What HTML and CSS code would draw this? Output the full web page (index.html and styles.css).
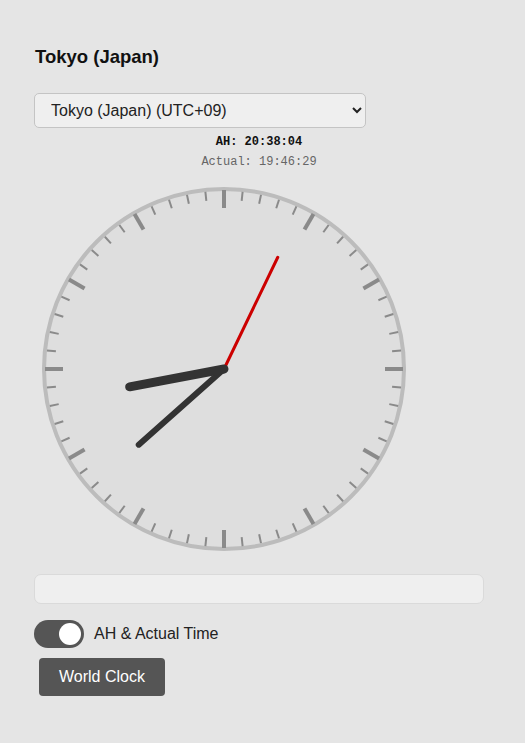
FILE: index.html
```html
<!DOCTYPE html>
<html>
<head>
<meta charset="utf-8">
<link rel="stylesheet" href="styles.css">
</head>
<body>
<div class="page">
  <h1 class="title">Tokyo (Japan)</h1>
  <select class="zone">
    <option>Tokyo (Japan) (UTC+09)</option>
  </select>
  <div class="times">
    <div class="ah">AH: 20:38:04</div>
    <div class="actual">Actual: 19:46:29</div>
  </div>
  <svg class="clock" width="364" height="364" viewBox="-182 -182 364 364">
    <circle cx="0" cy="0" r="180" fill="#dedede" stroke="#bcbcbc" stroke-width="4"/>
    <g stroke="#8a8a8a" stroke-width="2">
      <line x1="0" y1="-178" x2="0" y2="-169" transform="rotate(6)"/>
      <line x1="0" y1="-178" x2="0" y2="-169" transform="rotate(12)"/>
      <line x1="0" y1="-178" x2="0" y2="-169" transform="rotate(18)"/>
      <line x1="0" y1="-178" x2="0" y2="-169" transform="rotate(24)"/>
      <line x1="0" y1="-178" x2="0" y2="-169" transform="rotate(36)"/>
      <line x1="0" y1="-178" x2="0" y2="-169" transform="rotate(42)"/>
      <line x1="0" y1="-178" x2="0" y2="-169" transform="rotate(48)"/>
      <line x1="0" y1="-178" x2="0" y2="-169" transform="rotate(54)"/>
      <line x1="0" y1="-178" x2="0" y2="-169" transform="rotate(66)"/>
      <line x1="0" y1="-178" x2="0" y2="-169" transform="rotate(72)"/>
      <line x1="0" y1="-178" x2="0" y2="-169" transform="rotate(78)"/>
      <line x1="0" y1="-178" x2="0" y2="-169" transform="rotate(84)"/>
      <line x1="0" y1="-178" x2="0" y2="-169" transform="rotate(96)"/>
      <line x1="0" y1="-178" x2="0" y2="-169" transform="rotate(102)"/>
      <line x1="0" y1="-178" x2="0" y2="-169" transform="rotate(108)"/>
      <line x1="0" y1="-178" x2="0" y2="-169" transform="rotate(114)"/>
      <line x1="0" y1="-178" x2="0" y2="-169" transform="rotate(126)"/>
      <line x1="0" y1="-178" x2="0" y2="-169" transform="rotate(132)"/>
      <line x1="0" y1="-178" x2="0" y2="-169" transform="rotate(138)"/>
      <line x1="0" y1="-178" x2="0" y2="-169" transform="rotate(144)"/>
      <line x1="0" y1="-178" x2="0" y2="-169" transform="rotate(156)"/>
      <line x1="0" y1="-178" x2="0" y2="-169" transform="rotate(162)"/>
      <line x1="0" y1="-178" x2="0" y2="-169" transform="rotate(168)"/>
      <line x1="0" y1="-178" x2="0" y2="-169" transform="rotate(174)"/>
      <line x1="0" y1="-178" x2="0" y2="-169" transform="rotate(186)"/>
      <line x1="0" y1="-178" x2="0" y2="-169" transform="rotate(192)"/>
      <line x1="0" y1="-178" x2="0" y2="-169" transform="rotate(198)"/>
      <line x1="0" y1="-178" x2="0" y2="-169" transform="rotate(204)"/>
      <line x1="0" y1="-178" x2="0" y2="-169" transform="rotate(216)"/>
      <line x1="0" y1="-178" x2="0" y2="-169" transform="rotate(222)"/>
      <line x1="0" y1="-178" x2="0" y2="-169" transform="rotate(228)"/>
      <line x1="0" y1="-178" x2="0" y2="-169" transform="rotate(234)"/>
      <line x1="0" y1="-178" x2="0" y2="-169" transform="rotate(246)"/>
      <line x1="0" y1="-178" x2="0" y2="-169" transform="rotate(252)"/>
      <line x1="0" y1="-178" x2="0" y2="-169" transform="rotate(258)"/>
      <line x1="0" y1="-178" x2="0" y2="-169" transform="rotate(264)"/>
      <line x1="0" y1="-178" x2="0" y2="-169" transform="rotate(276)"/>
      <line x1="0" y1="-178" x2="0" y2="-169" transform="rotate(282)"/>
      <line x1="0" y1="-178" x2="0" y2="-169" transform="rotate(288)"/>
      <line x1="0" y1="-178" x2="0" y2="-169" transform="rotate(294)"/>
      <line x1="0" y1="-178" x2="0" y2="-169" transform="rotate(306)"/>
      <line x1="0" y1="-178" x2="0" y2="-169" transform="rotate(312)"/>
      <line x1="0" y1="-178" x2="0" y2="-169" transform="rotate(318)"/>
      <line x1="0" y1="-178" x2="0" y2="-169" transform="rotate(324)"/>
      <line x1="0" y1="-178" x2="0" y2="-169" transform="rotate(336)"/>
      <line x1="0" y1="-178" x2="0" y2="-169" transform="rotate(342)"/>
      <line x1="0" y1="-178" x2="0" y2="-169" transform="rotate(348)"/>
      <line x1="0" y1="-178" x2="0" y2="-169" transform="rotate(354)"/>
    </g>
    <g stroke="#8a8a8a" stroke-width="4">
      <line x1="0" y1="-179" x2="0" y2="-161"/>
      <line x1="0" y1="-179" x2="0" y2="-161" transform="rotate(30)"/>
      <line x1="0" y1="-179" x2="0" y2="-161" transform="rotate(60)"/>
      <line x1="0" y1="-179" x2="0" y2="-161" transform="rotate(90)"/>
      <line x1="0" y1="-179" x2="0" y2="-161" transform="rotate(120)"/>
      <line x1="0" y1="-179" x2="0" y2="-161" transform="rotate(150)"/>
      <line x1="0" y1="-179" x2="0" y2="-161" transform="rotate(180)"/>
      <line x1="0" y1="-179" x2="0" y2="-161" transform="rotate(210)"/>
      <line x1="0" y1="-179" x2="0" y2="-161" transform="rotate(240)"/>
      <line x1="0" y1="-179" x2="0" y2="-161" transform="rotate(270)"/>
      <line x1="0" y1="-179" x2="0" y2="-161" transform="rotate(300)"/>
      <line x1="0" y1="-179" x2="0" y2="-161" transform="rotate(330)"/>
    </g>
    <line x1="0" y1="0" x2="0" y2="-124" stroke="#cc0000" stroke-width="3" stroke-linecap="round" transform="rotate(25.7)"/>
    <line x1="0" y1="0" x2="0" y2="-114" stroke="#333333" stroke-width="6" stroke-linecap="round" transform="rotate(228.4)"/>
    <line x1="0" y1="0" x2="0" y2="-96" stroke="#333333" stroke-width="9" stroke-linecap="round" transform="rotate(259.3)"/>
  </svg>
  <div class="bar"></div>
  <label class="toggle-row">
    <span class="track"><span class="knob"></span></span>
    <span class="toggle-label">AH &amp; Actual Time</span>
  </label>
  <button class="btn">World Clock</button>
</div>
</body>
</html>
```

FILE: styles.css
```css
html, body {
  margin: 0;
  padding: 0;
  background: #e5e5e5;
}
body {
  font-family: "Liberation Sans", Arial, sans-serif;
  color: #222;
}
.page {
  width: 450px;
  padding: 46px 0 0 34px;
  display: flex;
  flex-direction: column;
  align-items: flex-start;
}
.title {
  margin: 0 0 0 1px;
  font-size: 18.5px;
  line-height: 21px;
  font-weight: bold;
  color: #111;
}
.zone {
  margin-top: 26px;
  width: 332px;
  height: 35px;
  padding: 0 12px;
  font-family: "Liberation Sans", Arial, sans-serif;
  font-size: 16px;
  color: #222;
  background: #efefef;
  border: 1px solid #c4c4c4;
  border-radius: 5px;
}
.times {
  align-self: stretch;
  margin-top: 7px;
  text-align: center;
  font-family: "Liberation Mono", "Courier New", monospace;
  font-size: 12px;
  line-height: 14px;
}
.ah {
  font-weight: bold;
  color: #111;
}
.actual {
  margin-top: 5.5px;
  color: #666;
}
.clock {
  display: block;
  margin: 18px 0 0 8px;
}
.bar {
  align-self: stretch;
  margin-top: 23px;
  height: 28px;
  background: #efefef;
  border: 1px solid #dadada;
  border-radius: 7px;
}
.toggle-row {
  margin-top: 16px;
  display: flex;
  align-items: center;
  gap: 10px;
}
.track {
  width: 50px;
  height: 28px;
  border-radius: 14px;
  background: #555;
  display: flex;
  align-items: center;
  justify-content: flex-end;
  padding-right: 3px;
  box-sizing: border-box;
}
.knob {
  width: 22px;
  height: 22px;
  border-radius: 50%;
  background: #fff;
}
.toggle-label {
  font-size: 16px;
  color: #222;
}
.btn {
  margin: 10px 0 0 5px;
  width: 126px;
  height: 38px;
  padding: 0;
  background: #555;
  color: #fff;
  border: none;
  border-radius: 4px;
  font-family: "Liberation Sans", Arial, sans-serif;
  font-size: 16px;
}
```
